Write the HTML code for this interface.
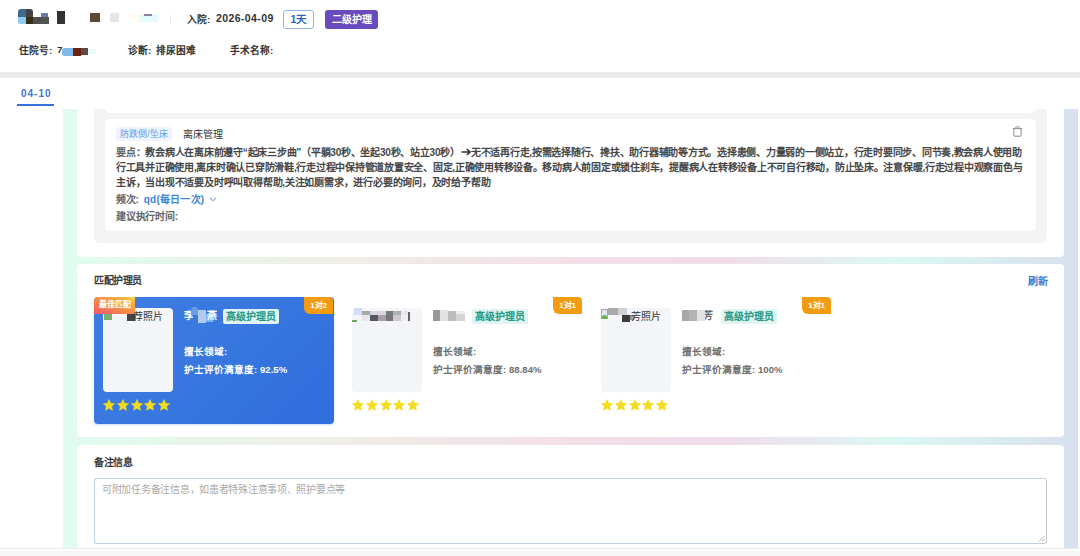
<!DOCTYPE html>
<html lang="zh-CN"><head><meta charset="utf-8">
<style>
*{box-sizing:border-box;margin:0;padding:0}
html,body{text-spacing-trim:space-all;width:1080px;height:556px;overflow:hidden;background:#fff;font-family:"Liberation Sans",sans-serif;color:#333}
.a{position:absolute}
.nw{white-space:nowrap}
.b{font-weight:bold}
/* header */
.hd{font-size:9.7px;font-weight:600;color:#333}
.dt{font-size:10.5px;font-weight:bold;letter-spacing:.4px}
.tag1{left:283px;top:10px;width:31px;height:19px;border:1px solid #8fb4e8;border-radius:3px;color:#2f5fc0;font-size:10.5px;font-weight:bold;text-align:center;line-height:17px}
.tag2{left:325px;top:10px;width:53px;height:19px;background:#6a4bbd;border-radius:3px;color:#fff;font-size:10px;font-weight:bold;text-align:center;line-height:19px}
.band{left:0;top:72px;width:1080px;height:6px;background:#ebebeb}
.tab{left:21px;top:88px;font-size:10px;font-weight:bold;color:#4175d8;letter-spacing:1px}
.tabline{left:17px;top:104px;width:37px;height:2px;background:#3a6fe0}
/* scroll area */
.sc{left:63px;top:109px;width:1015px;height:439px;overflow:hidden;background:linear-gradient(90deg,#dffcef 0%,#efefe6 25%,#f3dfe8 50%,#f1dcea 65%,#dcf8f3 82%,#d8e0ee 100%)}
.card{position:absolute;left:14px;width:987px;background:#fff;border-radius:4px}
.gray{position:absolute;left:17px;width:953px;background:#f3f3f3;border-radius:6px}
.wc{position:absolute;left:11px;width:931px;background:#fff;border-radius:5px}
.ttl{font-size:10px;font-weight:600;color:#3a3a3a;letter-spacing:-.4px}
.jl{display:block;text-align:justify;text-align-last:justify;height:15px}
.txt{text-spacing-trim:space-all;font-size:10px;letter-spacing:-.22px;line-height:15px;color:#464646;font-weight:600}
.nc{position:absolute;top:33px;width:240px;height:127px;border-radius:4px}
.nc.act{background:linear-gradient(135deg,#3f7fe2,#2f6edc);box-shadow:0 1px 2px rgba(40,90,200,.25)}
.photo{left:9px;top:11px;width:70px;height:84px;background:#f4f5f9;border-radius:4px}
.alt{right:10px;top:2px;font-size:10px;font-weight:500;color:#333;line-height:14px}
.stars{display:flex;gap:1.8px}
.stars svg{display:block}
.nname{left:90px;top:12px;width:34px;height:15px}
.ntag{left:129px;top:12px;width:56px;height:15px;background:#e0f4f2;color:#239a88;font-size:10px;font-weight:600;text-align:center;line-height:15px;border-radius:2px}
.nl{left:90px;font-size:9.6px;font-weight:600;color:#6e6e6e;line-height:14px}
.act .nl{font-weight:600}
.act .nl{color:#fff}
.badge{right:1px;top:0;width:29px;height:17px;background:#f39c12;color:#fff;font-size:8px;font-weight:bold;text-align:center;line-height:17px;border-radius:0 4px 0 6px;letter-spacing:-.1px}
.best{left:0;top:0;width:41px;height:17px;letter-spacing:0;background:linear-gradient(20deg,#f2566e 0%,#f48a48 45%,#f8a83e 75%,#fcd83a 100%);color:#fff;font-size:8px;font-weight:bold;text-align:center;line-height:16px;border-radius:4px 0 2px 0}
.ta{left:17px;top:33px;width:953px;height:66px;border:1px solid #bcd3e3;border-right-color:#c8c8c8;border-radius:3px;background:#fff}
.bottom{left:0;top:548px;width:1080px;height:8px;background:linear-gradient(#fdfdfd 0,#fdfdfd 1.5px,#f6f6f6 2.5px);border-top:1px solid #ebebeb}
</style></head><body>

<!-- header name mosaic -->
<div class="a" style="left:18px;top:9px;width:8px;height:8px;background:#3f6a8e;border-radius:3px 0 0 0"></div>
<div class="a" style="left:26px;top:9px;width:7px;height:8px;background:#444;border-radius:0 3px 0 0"></div>
<div class="a" style="left:18px;top:17px;width:8px;height:7px;background:#8ecbf0;border-radius:0 0 0 2px"></div>
<div class="a" style="left:26px;top:17px;width:7px;height:7px;background:#3a2e18"></div>
<div class="a" style="left:33px;top:17px;width:8px;height:7px;background:#504f55"></div>
<div class="a" style="left:41px;top:17px;width:8px;height:7px;background:#555550"></div>
<div class="a" style="left:41px;top:13px;width:7px;height:4px;background:#6a7aa0"></div>
<div class="a" style="left:57px;top:11px;width:8px;height:13px;background:#333"></div>
<div class="a" style="left:90px;top:13px;width:10px;height:9px;background:#5a4a35"></div>
<div class="a" style="left:110px;top:13px;width:9px;height:9px;background:#e6e6e6"></div>
<div class="a" style="left:129px;top:14px;width:10px;height:8px;background:#fffdf0"></div>
<div class="a" style="left:139px;top:14px;width:19px;height:8px;background:#e6fbfe"></div>
<div class="a" style="left:144px;top:14px;width:8px;height:2px;background:#8a80a0"></div>
<div class="a" style="left:170px;top:15px;width:1px;height:8px;background:#e8e8e8"></div>

<div class="a nw hd jx" style="left:187px;top:12px;width:23.33px;text-align:justify;text-align-last:justify">入院:</div><div class="a nw hd dt" style="left:216px;top:12px">2026-04-09</div>
<div class="a tag1">1天</div>
<div class="a tag2">二级护理</div>

<div class="a nw hd jx" style="left:19px;top:43px;width:33.33px;text-align:justify;text-align-last:justify">住院号:</div>
<div class="a nw hd jx" style="left:57px;top:44px;width:5.49px;text-align:justify;text-align-last:justify">7</div>
<div class="a" style="left:62px;top:48px;width:11px;height:8px;background:#80b8e6;border-radius:3px 0 0 3px"></div>
<div class="a" style="left:73px;top:48px;width:8px;height:8px;background:#6e2015"></div>
<div class="a" style="left:81px;top:48px;width:7px;height:7px;background:#5e4a40"></div>
<div class="a" style="left:88px;top:49px;width:8px;height:5px;background:#e8fafc"></div>
<div class="a nw hd jx" style="left:128px;top:43px;width:23.33px;text-align:justify;text-align-last:justify">诊断:</div>
<div class="a nw hd jx" style="left:156px;top:43px;width:40.10px;text-align:justify;text-align-last:justify">排尿困难</div>
<div class="a nw hd jx" style="left:230px;top:43px;width:43.33px;text-align:justify;text-align-last:justify">手术名称:</div>

<div class="a band"></div>
<div class="a tab">04-10</div>
<div class="a tabline"></div>

<div class="a sc">
  <!-- card 1 -->
  <div class="card" style="top:-60px;height:208px">
    <div class="gray" style="top:0;height:194px">
      <div class="wc" style="top:0;height:64px"></div>
      <div class="wc" style="top:70px;height:112px">
        <div class="a nw" style="left:11px;top:8px;width:56px;height:14px;background:#edf4fd;border-radius:3px;color:#5b9be8;font-size:9px;text-align:center;line-height:14px">防跌倒/坠床</div>
        <div class="a nw jx" style="left:78px;top:9px;font-size:10px;color:#333;line-height:14px;font-weight:500;width:40.10px;text-align:justify;text-align-last:justify">离床管理</div>
        <div class="a nw txt" style="left:11px;top:26px;">
<div class="jl" style="width:906px"><span style="color:#666;letter-spacing:-.25px">要点：</span><span style="letter-spacing:-.25px">教会病人在离床前遵守“起床三步曲”（平躺30秒、坐起30秒、站立30秒）<svg width="10" height="8" viewBox="0 0 10 8" style="vertical-align:0px;margin:0 0 0 1px"><path d="M0.5 4H8.5M5.8 1.2L9.2 4L5.8 6.8" fill="none" stroke="#333" stroke-width="1.5"/></svg>无不适再行走,按需选择随行、搀扶、助行器辅助等方式。选择患侧、力量弱的一侧站立，行走时要同步、同节奏,教会病人使用助</span></div><div class="jl" style="width:906.4px"><span style="letter-spacing:-.26px">行工具并正确使用,离床时确认已穿防滑鞋,行走过程中保持管道放置安全、固定,正确使用转移设备。移动病人前固定或锁住刹车，提醒病人在转移设备上不可自行移动，防止坠床。注意保暖,行走过程中观察面色与</span></div><div class="jl" style="width:374.4px">主诉，当出现不适要及时呼叫取得帮助,关注如厕需求，进行必要的询问，及时给予帮助</div></div>
        <div class="a nw txt" style="left:11px;top:73px;"><span style="color:#666">频次:</span>&nbsp; <span style="color:#3f86d6;letter-spacing:.2px">qd(每日一次)</span><svg width="8" height="5" viewBox="0 0 8 5" style="margin-left:5px;vertical-align:1px"><path d="M1 .8L4 3.8L7 .8" fill="none" stroke="#7fa8e0" stroke-width="1.1"/></svg></div>
        <div class="a nw txt jx" style="left:11px;top:90px;color:#666;width:61.90px;text-align:justify;text-align-last:justify">建议执行时间:</div>
        <svg class="a" style="left:907px;top:7px" width="11" height="11" viewBox="0 0 11 11"><path d="M.8 2.6H10.2M3.6 2.6V1.6Q3.6 .9 4.3 .9H6.7Q7.4 .9 7.4 1.6V2.6M1.9 2.6V9.2Q1.9 10.2 2.9 10.2H8.1Q9.1 10.2 9.1 9.2V2.6" fill="none" stroke="#8c8c8c" stroke-width="1"/></svg>
      </div>
    </div>
  </div>
  <!-- card 2 -->
  <div class="card" style="top:155px;height:173px">
    <div class="a ttl nw jx" style="left:17px;top:8px;width:48.12px;text-align:justify;text-align-last:justify">匹配护理员</div>
    <div class="a nw jx" style="left:951px;top:9px;font-size:10px;font-weight:bold;color:#3a7fd0;width:20.10px;text-align:justify;text-align-last:justify">刷新</div>
<div class="nc act" style="left:17px"><div class="a photo"><div class="a" style="left:0.5px;top:6px;width:8px;height:6px;background:#79b070;"></div><div class="a" style="left:24px;top:4px;width:8px;height:9px;background:#444;"></div><div class="a alt nw">荐照片</div></div><div class="a stars" style="left:9px;top:102px"><svg width="12" height="12" viewBox="0 0 24 24"><path d="M12.0 1.2 L15.3 8.5 L23.2 9.4 L17.3 14.7 L18.9 22.5 L12.0 18.6 L5.1 22.5 L6.7 14.7 L0.8 9.4 L8.7 8.5Z" fill="#f2dc1e" stroke="#f2dc1e" stroke-width="1.2" stroke-linejoin="round"/></svg><svg width="12" height="12" viewBox="0 0 24 24"><path d="M12.0 1.2 L15.3 8.5 L23.2 9.4 L17.3 14.7 L18.9 22.5 L12.0 18.6 L5.1 22.5 L6.7 14.7 L0.8 9.4 L8.7 8.5Z" fill="#f2dc1e" stroke="#f2dc1e" stroke-width="1.2" stroke-linejoin="round"/></svg><svg width="12" height="12" viewBox="0 0 24 24"><path d="M12.0 1.2 L15.3 8.5 L23.2 9.4 L17.3 14.7 L18.9 22.5 L12.0 18.6 L5.1 22.5 L6.7 14.7 L0.8 9.4 L8.7 8.5Z" fill="#f2dc1e" stroke="#f2dc1e" stroke-width="1.2" stroke-linejoin="round"/></svg><svg width="12" height="12" viewBox="0 0 24 24"><path d="M12.0 1.2 L15.3 8.5 L23.2 9.4 L17.3 14.7 L18.9 22.5 L12.0 18.6 L5.1 22.5 L6.7 14.7 L0.8 9.4 L8.7 8.5Z" fill="#f2dc1e" stroke="#f2dc1e" stroke-width="1.2" stroke-linejoin="round"/></svg><svg width="12" height="12" viewBox="0 0 24 24"><path d="M12.0 1.2 L15.3 8.5 L23.2 9.4 L17.3 14.7 L18.9 22.5 L12.0 18.6 L5.1 22.5 L6.7 14.7 L0.8 9.4 L8.7 8.5Z" fill="#f2dc1e" stroke="#f2dc1e" stroke-width="1.2" stroke-linejoin="round"/></svg></div><div class="a nw" style="left:90px;top:13px;font-size:10px;font-weight:bold;color:#fff;line-height:12px;width:9px;overflow:hidden">李</div><div class="a" style="left:97px;top:10px;width:7px;height:8px;background:#6c9be8;border-radius:4px 4px 0 0"></div><div class="a" style="left:104px;top:13px;width:8px;height:13px;background:#b3cbea;"></div><div class="a" style="left:112px;top:17px;width:7px;height:8px;background:#7ab5ef;"></div><div class="a nw" style="left:113px;top:13px;font-size:10px;font-weight:bold;color:#fff;line-height:12px;width:10px;overflow:hidden;direction:rtl">燕</div><div class="a ntag">高级护理员</div><div class="a nw nl jx" style="top:48px;width:43.30px;text-align:justify;text-align-last:justify">擅长领域:</div><div class="a nw nl jx" style="top:66px;width:103.18px;text-align:justify;text-align-last:justify">护士评价满意度: 92.5%</div><div class="a badge">1对2</div><div class="a best">最佳匹配</div></div>
<div class="nc" style="left:266px"><div class="a photo"><div class="a" style="left:2px;top:0px;width:8px;height:7px;background:#d0e0f4;"></div><div class="a" style="left:10px;top:3px;width:8px;height:4px;background:#a8a8a8;"></div><div class="a" style="left:18px;top:3px;width:16px;height:4px;background:#d8d8dc;"></div><div class="a" style="left:34px;top:3px;width:7px;height:4px;background:#7a7a7a;"></div><div class="a" style="left:41px;top:3px;width:8px;height:4px;background:#aab0b4;"></div><div class="a" style="left:49px;top:3px;width:7px;height:4px;background:#e8e8ea;"></div><div class="a" style="left:10px;top:7px;width:8px;height:6px;background:#e8e8ea;"></div><div class="a" style="left:18px;top:7px;width:8px;height:6px;background:#555860;"></div><div class="a" style="left:26px;top:7px;width:8px;height:6px;background:#a8a0a8;"></div><div class="a" style="left:34px;top:7px;width:7px;height:6px;background:#777;"></div><div class="a" style="left:41px;top:7px;width:8px;height:6px;background:#d0c8d0;"></div><div class="a" style="left:49px;top:7px;width:7px;height:6px;background:#eeeeee;"></div><div class="a" style="left:56px;top:4px;width:2px;height:9px;background:#666;"></div><div class="a" style="left:0px;top:12px;width:5px;height:2px;background:#70a860;"></div></div><div class="a stars" style="left:9px;top:102px"><svg width="12" height="12" viewBox="0 0 24 24"><path d="M12.0 1.2 L15.3 8.5 L23.2 9.4 L17.3 14.7 L18.9 22.5 L12.0 18.6 L5.1 22.5 L6.7 14.7 L0.8 9.4 L8.7 8.5Z" fill="#f2dc1e" stroke="#f2dc1e" stroke-width="1.2" stroke-linejoin="round"/></svg><svg width="12" height="12" viewBox="0 0 24 24"><path d="M12.0 1.2 L15.3 8.5 L23.2 9.4 L17.3 14.7 L18.9 22.5 L12.0 18.6 L5.1 22.5 L6.7 14.7 L0.8 9.4 L8.7 8.5Z" fill="#f2dc1e" stroke="#f2dc1e" stroke-width="1.2" stroke-linejoin="round"/></svg><svg width="12" height="12" viewBox="0 0 24 24"><path d="M12.0 1.2 L15.3 8.5 L23.2 9.4 L17.3 14.7 L18.9 22.5 L12.0 18.6 L5.1 22.5 L6.7 14.7 L0.8 9.4 L8.7 8.5Z" fill="#f2dc1e" stroke="#f2dc1e" stroke-width="1.2" stroke-linejoin="round"/></svg><svg width="12" height="12" viewBox="0 0 24 24"><path d="M12.0 1.2 L15.3 8.5 L23.2 9.4 L17.3 14.7 L18.9 22.5 L12.0 18.6 L5.1 22.5 L6.7 14.7 L0.8 9.4 L8.7 8.5Z" fill="#f2dc1e" stroke="#f2dc1e" stroke-width="1.2" stroke-linejoin="round"/></svg><svg width="12" height="12" viewBox="0 0 24 24"><path d="M12.0 1.2 L15.3 8.5 L23.2 9.4 L17.3 14.7 L18.9 22.5 L12.0 18.6 L5.1 22.5 L6.7 14.7 L0.8 9.4 L8.7 8.5Z" fill="#f2dc1e" stroke="#f2dc1e" stroke-width="1.2" stroke-linejoin="round"/></svg></div><div class="a" style="left:90px;top:13px;width:7px;height:11px;background:#9a9a9a;"></div><div class="a" style="left:97px;top:13px;width:8px;height:11px;background:#e2e2e2;"></div><div class="a" style="left:105px;top:14px;width:8px;height:10px;background:#bcbcbc;"></div><div class="a" style="left:113px;top:17px;width:9px;height:7px;background:#d4d4d8;"></div><div class="a" style="left:113px;top:14px;width:9px;height:3px;background:#eeeeee;"></div><div class="a ntag">高级护理员</div><div class="a nw nl jx" style="top:48px;width:43.30px;text-align:justify;text-align-last:justify">擅长领域:</div><div class="a nw nl jx" style="top:66px;width:108.51px;text-align:justify;text-align-last:justify">护士评价满意度: 88.84%</div><div class="a badge">1对1</div></div>
<div class="nc" style="left:515px"><div class="a photo"><div class="a" style="left:0px;top:1px;width:7px;height:10px;background:#dfe7ef;border:1px solid #9aa8b8"></div><div class="a" style="left:1px;top:7px;width:5px;height:4px;background:#6ab050;border-radius:4px 4px 0 0"></div><div class="a" style="left:7px;top:0px;width:10px;height:7px;background:#aaaaaa;"></div><div class="a" style="left:17px;top:0px;width:9px;height:7px;background:#d0d0d0;"></div><div class="a" style="left:21px;top:7px;width:8px;height:7px;background:#3a3a3a;"></div><div class="a" style="left:29px;top:7px;width:4px;height:5px;background:#999;"></div><div class="a alt nw">芳照片</div></div><div class="a stars" style="left:9px;top:102px"><svg width="12" height="12" viewBox="0 0 24 24"><path d="M12.0 1.2 L15.3 8.5 L23.2 9.4 L17.3 14.7 L18.9 22.5 L12.0 18.6 L5.1 22.5 L6.7 14.7 L0.8 9.4 L8.7 8.5Z" fill="#f2dc1e" stroke="#f2dc1e" stroke-width="1.2" stroke-linejoin="round"/></svg><svg width="12" height="12" viewBox="0 0 24 24"><path d="M12.0 1.2 L15.3 8.5 L23.2 9.4 L17.3 14.7 L18.9 22.5 L12.0 18.6 L5.1 22.5 L6.7 14.7 L0.8 9.4 L8.7 8.5Z" fill="#f2dc1e" stroke="#f2dc1e" stroke-width="1.2" stroke-linejoin="round"/></svg><svg width="12" height="12" viewBox="0 0 24 24"><path d="M12.0 1.2 L15.3 8.5 L23.2 9.4 L17.3 14.7 L18.9 22.5 L12.0 18.6 L5.1 22.5 L6.7 14.7 L0.8 9.4 L8.7 8.5Z" fill="#f2dc1e" stroke="#f2dc1e" stroke-width="1.2" stroke-linejoin="round"/></svg><svg width="12" height="12" viewBox="0 0 24 24"><path d="M12.0 1.2 L15.3 8.5 L23.2 9.4 L17.3 14.7 L18.9 22.5 L12.0 18.6 L5.1 22.5 L6.7 14.7 L0.8 9.4 L8.7 8.5Z" fill="#f2dc1e" stroke="#f2dc1e" stroke-width="1.2" stroke-linejoin="round"/></svg><svg width="12" height="12" viewBox="0 0 24 24"><path d="M12.0 1.2 L15.3 8.5 L23.2 9.4 L17.3 14.7 L18.9 22.5 L12.0 18.6 L5.1 22.5 L6.7 14.7 L0.8 9.4 L8.7 8.5Z" fill="#f2dc1e" stroke="#f2dc1e" stroke-width="1.2" stroke-linejoin="round"/></svg></div><div class="a" style="left:90px;top:13px;width:7px;height:11px;background:#a8a8a8;"></div><div class="a" style="left:97px;top:13px;width:8px;height:11px;background:#b4b4b4;"></div><div class="a" style="left:105px;top:13px;width:8px;height:11px;background:#e2e2e2;"></div><div class="a nw" style="left:113px;top:13px;font-size:10px;font-weight:bold;color:#666;line-height:12px;width:8px;overflow:hidden;direction:rtl">芳</div><div class="a ntag">高级护理员</div><div class="a nw nl jx" style="top:48px;width:43.30px;text-align:justify;text-align-last:justify">擅长领域:</div><div class="a nw nl jx" style="top:66px;width:100.51px;text-align:justify;text-align-last:justify">护士评价满意度: 100%</div><div class="a badge">1对1</div></div>
  </div>
  <!-- card 3 -->
  <div class="card" style="top:336px;height:200px">
    <div class="a ttl nw jx" style="left:17px;top:9px;width:38.51px;text-align:justify;text-align-last:justify">备注信息</div>
    <div class="a ta"><div class="a nw" style="left:7px;top:4px;width:243.1px;text-align:justify;text-align-last:justify;font-size:10px;color:#a9a9a9;line-height:14px;letter-spacing:-.28px">可附加任务备注信息，如患者特殊注意事项、照护要点等</div>
      <svg class="a" style="right:1px;bottom:1px" width="7" height="7" viewBox="0 0 7 7"><path d="M6.5 1L1 6.5M6.5 4L4 6.5" stroke="#999" stroke-width=".8"/></svg></div>
  </div>
</div>

<div class="a bottom"></div>
</body></html>
